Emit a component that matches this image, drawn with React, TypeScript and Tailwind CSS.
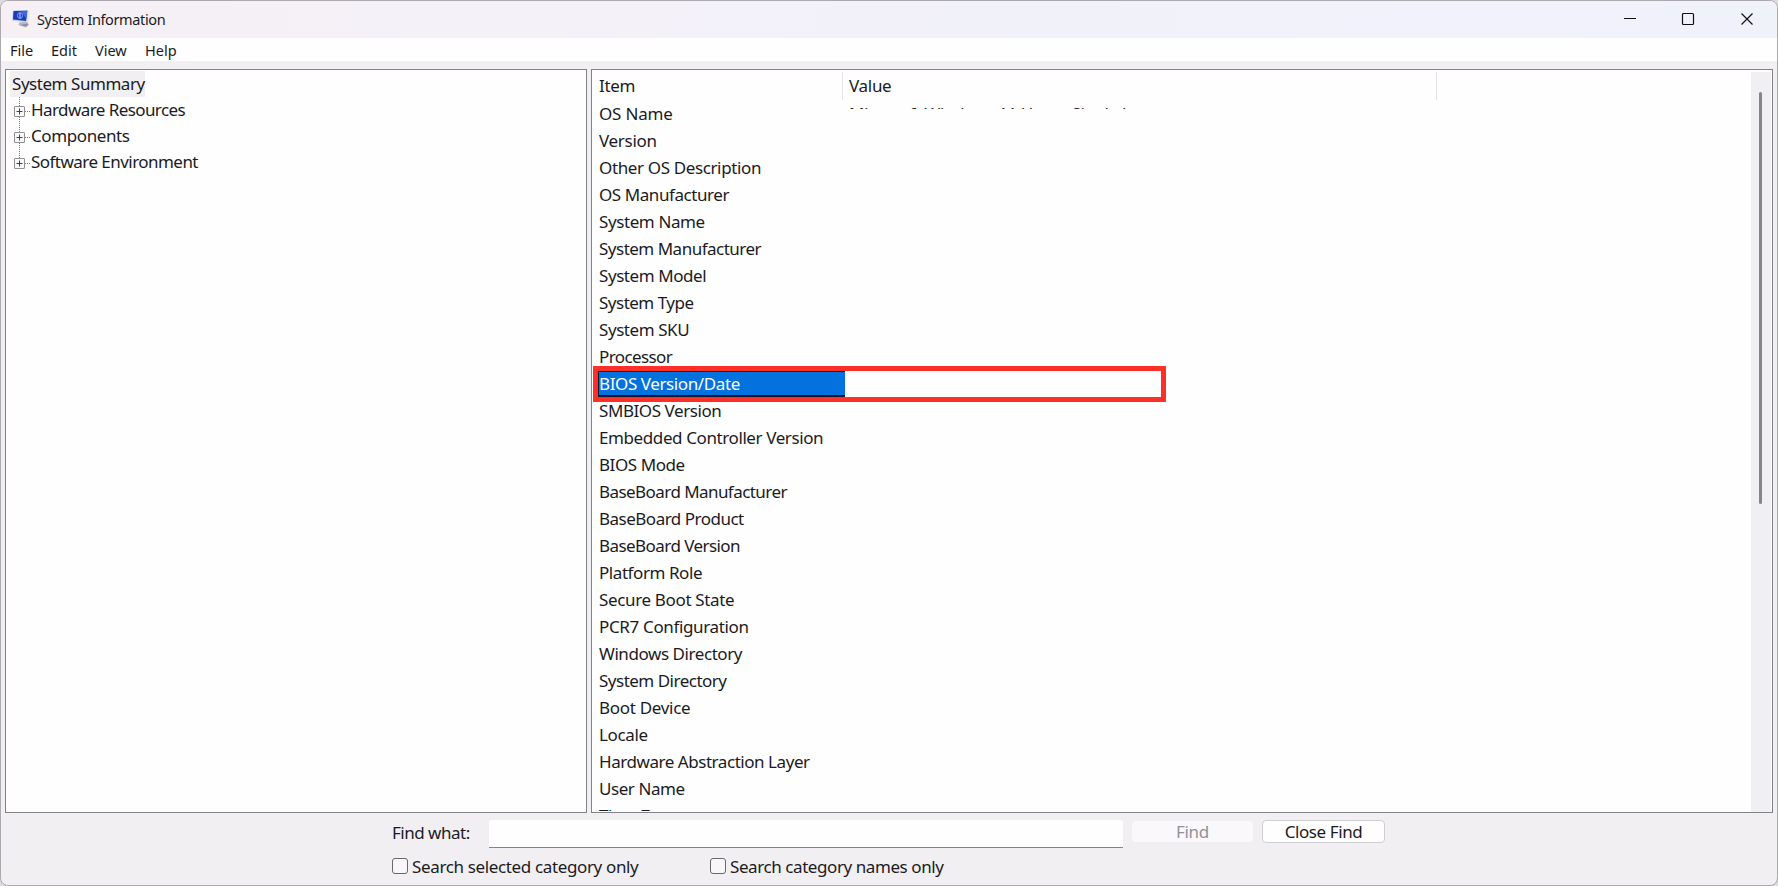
import { useState } from 'react'

const menus = [
  { label: 'File', className: 'w-[41px]' },
  { label: 'Edit', className: 'w-11' },
  { label: 'View', className: 'w-[50px]' },
  { label: 'Help', className: 'w-12' },
]

const categories = [
  { label: 'Hardware Resources', className: 'tracking-[-0.58px]' },
  { label: 'Components', className: 'tracking-[-0.4px]' },
  { label: 'Software Environment', className: 'tracking-[-0.54px]' },
]

const items = [
  { label: 'OS Name', className: 'tracking-[-0.2px]' },
  { label: 'Version', className: 'tracking-[-0.3px]' },
  { label: 'Other OS Description', className: 'tracking-[-0.37px]' },
  { label: 'OS Manufacturer', className: 'tracking-[-0.43px]' },
  { label: 'System Name', className: 'tracking-[-0.4px]' },
  { label: 'System Manufacturer', className: 'tracking-[-0.5px]' },
  { label: 'System Model', className: 'tracking-[-0.43px]' },
  { label: 'System Type', className: 'tracking-[-0.5px]' },
  { label: 'System SKU', className: 'tracking-[-0.43px]' },
  { label: 'Processor', className: 'tracking-[-0.6px]' },
  { label: 'BIOS Version/Date', className: 'tracking-[-0.4px]' },
  { label: 'SMBIOS Version', className: 'tracking-[-0.43px]' },
  { label: 'Embedded Controller Version', className: 'tracking-[-0.4px]' },
  { label: 'BIOS Mode', className: 'tracking-[-0.43px]' },
  { label: 'BaseBoard Manufacturer', className: 'tracking-[-0.56px]' },
  { label: 'BaseBoard Product', className: 'tracking-[-0.5px]' },
  { label: 'BaseBoard Version', className: 'tracking-[-0.56px]' },
  { label: 'Platform Role', className: 'tracking-[-0.43px]' },
  { label: 'Secure Boot State', className: 'tracking-[-0.35px]' },
  { label: 'PCR7 Configuration', className: 'tracking-[-0.35px]' },
  { label: 'Windows Directory', className: 'tracking-[-0.43px]' },
  { label: 'System Directory', className: 'tracking-[-0.5px]' },
  { label: 'Boot Device', className: 'tracking-[-0.3px]' },
  { label: 'Locale', className: 'tracking-[-0.35px]' },
  { label: 'Hardware Abstraction Layer', className: 'tracking-[-0.45px]' },
  { label: 'User Name', className: 'tracking-[-0.43px]' },
  { label: 'Time Zone', className: 'tracking-[-0.4px]' },
]

function AppIcon() {
  return (
    <svg className="ml-[10px] mt-[8px] h-5 w-5 shrink-0" viewBox="0 0 20 20">
      <path d="M16.500 1.500l1.300.6-1 11.500-2-.8z" fill="#e2e3ec" />
      <path d="M8 13.500l8-.8 2 3-3 2.800-7.500-2.500z" fill="#b4b6c4" />
      <path d="M9 16l7-1.500 1 1.500-2.500 1.500z" fill="#8d90a2" />
      <path d="M2 1.500l15-.3-1.500 12.300-14.500-2z" fill="#c9cee6" />
      <path d="M2.500 2l13.800-.3-1.300 10.300-13-1.500z" fill="#1a3bbd" />
      <path d="M10 2l6.300-.3-1 8.300z" fill="#3f68e0" />
      <ellipse cx="9" cy="6.500" rx="2.500" ry="3" fill="none" stroke="#7f9df2" />
      <path d="M9 4v5" stroke="#c5d4ff" />
    </svg>
  )
}

function TitleBar() {
  return (
    <div className="flex h-[37px] shrink-0 bg-gradient-to-r from-[#f6f0f5] via-[#f2f1fa] to-[#f0f2fa]">
      <AppIcon />
      <span className="ml-[6px] mt-[7px] text-[14.5px] leading-[22px] tracking-[-0.38px]">System Information</span>
      <div className="ml-auto mr-[23px] mt-[11px] flex h-[14px]">
        <svg className="mr-[44px] h-[14px] w-[14px]" viewBox="0 0 14 14" stroke="#111" fill="none">
          <path d="M1 6.500h12" />
        </svg>
        <svg className="mr-[45px] h-[14px] w-[14px]" viewBox="0 0 14 14" stroke="#111" fill="none">
          <rect x="1.500" y="1.500" width="11" height="11" rx="1" strokeWidth="1.200" />
        </svg>
        <svg className="h-[14px] w-[14px]" viewBox="0 0 14 14" stroke="#111" fill="none">
          <path d="M1.500 1.500l11 11M12.500 1.500l-11 11" strokeWidth="1.200" />
        </svg>
      </div>
    </div>
  )
}

function Tree() {
  return (
    <div className="w-[582px] shrink-0 border border-[#838387] bg-[#fefefe] pl-1 pt-px">
      <div className="h-[26px] w-[135px] whitespace-nowrap bg-[#f1eff1] pl-[2px] text-[17px] leading-[25px] tracking-[-0.45px]">
        System Summary
      </div>
      {categories.map((c, i) => (
        <div key={c.label} className="flex h-[26px]">
          <svg className="h-[26px] w-[21px] shrink-0" viewBox="0 0 21 26" fill="none">
            <path d={i === categories.length - 1 ? 'M9.500 0v14' : 'M9.500 0v26'} stroke="#777" strokeDasharray="1 1" />
            <path d="M15 14.500h5" stroke="#777" strokeDasharray="1 1" />
            <rect x="4.500" y="9.500" width="10" height="10" rx="0.500" fill="#f8f8fa" stroke="#909095" />
            <path d="M6.500 14.500h6M9.500 11.500v6" stroke="#39435c" />
          </svg>
          <span className={`whitespace-nowrap text-[17px] leading-[25px] ${c.className}`}>{c.label}</span>
        </div>
      ))}
    </div>
  )
}

function Details({ selected, onSelect }: { selected: number; onSelect: (i: number) => void }) {
  return (
    <div className="flex w-[1182px] shrink-0 border border-[#838387] bg-[#fefefe]">
      <div className="flex min-w-0 flex-1 flex-col overflow-hidden pb-px pt-[2px]">
        <div className="flex h-[28px] shrink-0 text-[17px] leading-[28px] tracking-[-0.3px]">
          <div className="w-[251px] border-r border-[#e5e5e5] pl-[7px]">Item</div>
          <div className="w-[594px] border-r border-[#e5e5e5] pl-[6px]">Value</div>
        </div>
        <div className="min-h-0 flex-1 overflow-hidden">
          {items.map((item, i) => (
            <div key={item.label} onClick={() => onSelect(i)} className={`relative flex h-[27px] text-[17px] leading-[27px] ${item.className}`}>
              {i === selected ? (
                <div className="absolute left-px top-[-4px] h-9 w-[573px] border-[5px] border-[#fc3029] bg-[#fefefe]">
                  <div className="h-[26px] w-[247px] border-b-2 border-l border-t border-[#101530] bg-[#0472de] leading-[24px] text-white">
                    {item.label}
                  </div>
                </div>
              ) : (
                <div className="w-[251px] whitespace-nowrap pl-[7px]">{item.label}</div>
              )}
              {i === 0 && (
                <div className="ml-[6px] h-[9px] w-[280px] overflow-hidden whitespace-nowrap tracking-[-0.42px]">
                  Microsoft Windows 11 Home Single Language
                </div>
              )}
            </div>
          ))}
        </div>
      </div>
      <div className="mr-px mt-[2px] w-5 shrink-0 bg-[#f0eff2] pl-2 pt-5">
        <div className="h-[412px] w-[3px] rounded-full bg-[#868689]" />
      </div>
    </div>
  )
}

function CheckOption({ label, className }: { label: string; className: string }) {
  return (
    <label className={`flex ${className}`}>
      <span className="mt-1 h-4 w-4 rounded-[3px] border border-[#68686c] bg-[#f7f6f8]" />
      <span className="ml-1 mt-px whitespace-nowrap text-[17px] leading-[24px]">{label}</span>
    </label>
  )
}

export default function App() {
  const [selected, setSelected] = useState(10)
  const [query, setQuery] = useState('')

  return (
    <div className="h-[886px] w-[1778px] bg-[#dcdbe0] font-['Noto_Sans','Open_Sans',sans-serif] text-[#1b1b1f]">
      <div className="flex h-full flex-col overflow-hidden rounded-lg border border-[#acaaae] bg-[#f1eff2]">
        <TitleBar />
        <div className="flex h-[23px] shrink-0 bg-[#fefefe] pl-[9px] text-[14.5px] leading-[25px]">
          {menus.map((m) => (
            <span key={m.label} className={m.className}>{m.label}</span>
          ))}
        </div>
        <div className="mt-2 flex h-[744px] shrink-0 gap-1 pl-1">
          <Tree />
          <Details selected={selected} onSelect={setSelected} />
        </div>
        <div className="mt-[7px] flex h-7 shrink-0 items-start pl-[391px] text-[17px]">
          <span className="w-[97px] leading-[26px] tracking-[-0.5px]">Find what:</span>
          <input
            value={query}
            onChange={(e) => setQuery(e.target.value)}
            className="h-7 w-[634px] rounded-t-[3px] border-b border-[#838387] bg-[#fefefe] px-2 outline-none"
          />
          <button disabled className="ml-[9px] mt-px h-[21px] w-[121px] rounded bg-[#f9f8fa] leading-[21px] tracking-[-0.3px] text-[#929197]">Find</button>
          <button className="ml-[9px] h-[23px] w-[123px] rounded border border-[#cfced2] bg-[#fefefe] leading-[21px] tracking-[-0.4px]">Close Find</button>
        </div>
        <div className="mt-[6px] flex pl-[391px]">
          <CheckOption label="Search selected category only" className="w-[318px] tracking-[-0.36px]" />
          <CheckOption label="Search category names only" className="w-[260px] tracking-[-0.42px]" />
        </div>
      </div>
    </div>
  )
}
